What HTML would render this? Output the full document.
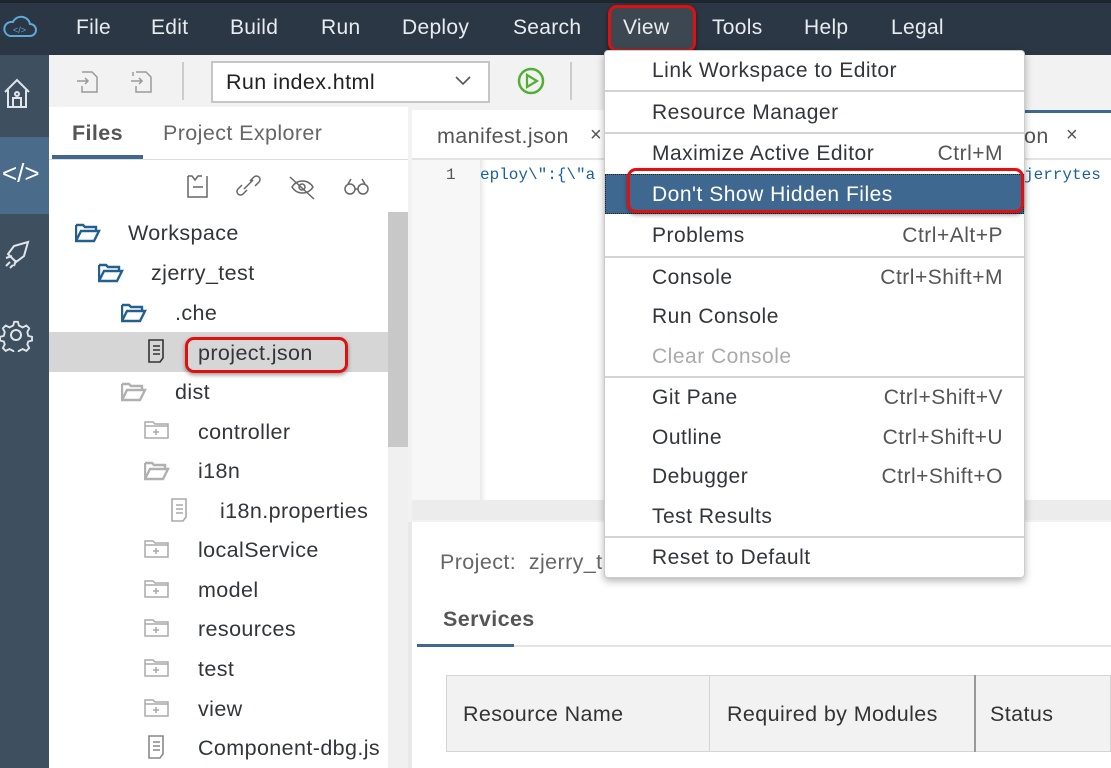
<!DOCTYPE html>
<html><head><meta charset="utf-8"><style>
*{margin:0;padding:0;box-sizing:border-box}
body{width:1111px;height:768px;overflow:hidden;position:relative;background:#fff;font-family:"Liberation Sans",sans-serif;color:#32363a}
.a{position:absolute;white-space:nowrap}
.top{left:0;top:0;width:1111px;height:55px;background:#2b3744;border-top:3px solid #1e252c}
.m{top:16px;font-size:21px;color:#e8ecef;letter-spacing:.3px}
.side{left:0;top:55px;width:49px;height:713px;background:#3e4f5f}
.t{font-size:21.5px;color:#32363a;line-height:24px;letter-spacing:.4px}
.mi{left:652px;font-size:21px;color:#32363a;line-height:24px;letter-spacing:.5px}
.sc{right:108px;font-size:21px;color:#555;line-height:24px;letter-spacing:.5px}
.sep{left:605px;width:419px;height:2px;background:#d4d4d4}
</style></head><body>
<div class="a top"></div>
<svg class="a" style="left:2px;top:14px" width="36" height="26" viewBox="0 0 36 26"><path d="M8 22h20a6 6 0 0 0 0-12a9 9 0 0 0-17-2a7 7 0 0 0-3 14z" fill="none" stroke="#5fa8d8" stroke-width="2"/><text x="11" y="19" font-size="9" fill="#5fa8d8" font-family="Liberation Sans">&lt;/&gt;</text></svg>
<div class="a m" style="left:76px">File</div>
<div class="a m" style="left:151px">Edit</div>
<div class="a m" style="left:230px">Build</div>
<div class="a m" style="left:321px">Run</div>
<div class="a m" style="left:402px">Deploy</div>
<div class="a m" style="left:513px">Search</div>
<div class="a" style="left:608px;top:5px;width:88px;height:47px;background:#3d4751;border:3px solid #e01010;border-radius:9px;box-shadow:0 2px 4px rgba(0,0,0,.5)"></div>
<div class="a m" style="left:623px">View</div>
<div class="a m" style="left:712px">Tools</div>
<div class="a m" style="left:804px">Help</div>
<div class="a m" style="left:891px">Legal</div>

<div class="a side"></div>
<div class="a" style="left:0;top:137px;width:49px;height:77px;background:#4a6b8a"></div>
<svg class="a" style="left:2px;top:76px" width="30" height="34" viewBox="0 0 30 34"><path d="M3 16L15 4l12 12M6 14v17h18V14M11 31v-9h8v9M13 18a2 2 0 1 0 4 0a2 2 0 1 0-4 0" fill="none" stroke="#dfe5ea" stroke-width="2"/></svg>
<div class="a" style="left:2px;top:158px;font-size:26px;color:#fff">&lt;/&gt;</div>
<svg class="a" style="left:2px;top:238px" width="30" height="34" viewBox="0 0 30 34"><path d="M26 4L12 8 6 16l8 8 8-6 4-14zM10 18l-6 2M14 22l-2 6M4 28l4-4M8 30l3-3" fill="none" stroke="#dfe5ea" stroke-width="2"/></svg>
<svg class="a" style="left:0;top:318px" width="34" height="34" viewBox="0 0 34 34"><circle cx="16" cy="17" r="5" fill="none" stroke="#dfe5ea" stroke-width="2"/><path d="M14 4h4l1 4 4 2 4-2 3 3-2 4 1 4 4 1v4l-4 1-1 3 2 4-3 3-4-2-4 2-1 4h-4l-1-4-4-2-4 2-3-3 2-4-1-3-4-1v-4l4-1 1-4-2-4 3-3 4 2 4-2z" fill="none" stroke="#dfe5ea" stroke-width="2" transform="translate(1 0) scale(.94)"/></svg>

<!-- toolbar -->
<div class="a" style="left:49px;top:55px;width:1062px;height:52px;background:#f2f2f2"></div>
<svg class="a" style="left:76px;top:68px" width="80" height="28" viewBox="0 0 80 28"><path d="M6 4h10l5 5v15H6v-6M1 13h11M9 10l3 3-3 3" fill="none" stroke="#999" stroke-width="1.5"/><path d="M60 4h10l5 5v15H60v-6M55 13h11M63 10l3 3-3 3M57 8v-4" fill="none" stroke="#999" stroke-width="1.5"/></svg>
<div class="a" style="left:182px;top:62px;width:2px;height:38px;background:#ccc"></div>
<div class="a" style="left:211px;top:61px;width:279px;height:42px;background:#fff;border:2px solid #c6c6c6"></div>
<div class="a t" style="left:226px;top:70px;color:#222">Run index.html</div>
<svg class="a" style="left:454px;top:75px" width="18" height="12"><path d="M2 2l7 7 7-7" fill="none" stroke="#555" stroke-width="1.6"/></svg>
<svg class="a" style="left:516px;top:66px" width="30" height="30"><circle cx="15" cy="15" r="12" fill="none" stroke="#4fb031" stroke-width="2.5"/><path d="M11 9v12l10-6z" fill="none" stroke="#4fb031" stroke-width="2.2"/></svg>
<div class="a" style="left:570px;top:62px;width:2px;height:38px;background:#ccc"></div>

<!-- left panel -->
<div class="a t" style="left:72px;top:121px;font-weight:bold;color:#555">Files</div>
<div class="a t" style="left:163px;top:121px;color:#666">Project Explorer</div>
<div class="a" style="left:52px;top:155px;width:91px;height:4px;background:#3f6890"></div>
<div class="a" style="left:49px;top:159px;width:359px;height:1px;background:#ddd"></div>
<svg class="a" style="left:185px;top:172px" width="190" height="30" viewBox="0 0 190 30"><path d="M3 4h4l3 4 3-4h4M3 4v21h19V4M8 15h10" fill="none" stroke="#666" stroke-width="1.5"/><path d="M62 18l-4 4a3 3 0 0 1-5-5l4-4M65 9l4-4a3 3 0 0 1 5 5l-4 4M59 17l9-9" fill="none" stroke="#666" stroke-width="1.5"/><path d="M107 15c5-8 16-8 21 0c-5 8-16 8-21 0zM105 5l24 22" fill="none" stroke="#666" stroke-width="1.5"/><circle cx="117" cy="15" r="3" fill="none" stroke="#666" stroke-width="1.5"/><circle cx="165" cy="17" r="5" fill="none" stroke="#666" stroke-width="1.5"/><circle cx="178" cy="17" r="5" fill="none" stroke="#666" stroke-width="1.5"/><path d="M163 12l3-5M180 12l-3-5M170 17h3" fill="none" stroke="#666" stroke-width="1.5"/></svg>
<div class="a" style="left:388px;top:212px;width:20px;height:556px;background:#f0f0f0"></div>
<div class="a" style="left:388px;top:212px;width:20px;height:235px;background:#c8c8c8"></div>
<div class="a" style="left:49px;top:332px;width:339px;height:40px;background:#d6d6d6"></div>

<svg width="0" height="0" style="position:absolute"><defs>
<g id="fo"><path d="M1 3h7l2 2h11v4M1 3v16h18l5-10H6L1 19" fill="none" stroke-width="2.4"/></g>
<g id="fc"><path d="M1 3h8l2 2h13v14H1zM1 7h23M12 10v6M9 13h6" fill="none" stroke-width="1.5"/></g>
<g id="fi"><path d="M2 1h14v18l-3 4H2zM6 7h7M6 11h7M6 15h7" fill="none" stroke-width="1.6"/></g>
</defs></svg>
<svg class="a" style="left:75px;top:222px" width="28" height="24"><use href="#fo" stroke="#22608f"/></svg>
<div class="a t" style="left:128px;top:221px">Workspace</div>
<svg class="a" style="left:98px;top:262px" width="28" height="24"><use href="#fo" stroke="#22608f"/></svg>
<div class="a t" style="left:151px;top:261px">zjerry_test</div>
<svg class="a" style="left:121px;top:302px" width="28" height="24"><use href="#fo" stroke="#22608f"/></svg>
<div class="a t" style="left:175px;top:301px">.che</div>
<svg class="a" style="left:147px;top:339px" width="20" height="26"><use href="#fi" stroke="#333"/></svg>
<div class="a" style="left:185px;top:337px;width:163px;height:36px;border:3px solid #e01010;border-radius:9px;box-shadow:0 2px 4px rgba(0,0,0,.4)"></div>
<div class="a t" style="left:198px;top:341px">project.json</div>
<svg class="a" style="left:121px;top:381px" width="28" height="24"><use href="#fo" stroke="#b0b0b0"/></svg>
<div class="a t" style="left:175px;top:380px">dist</div>
<svg class="a" style="left:144px;top:419px" width="28" height="24"><use href="#fc" stroke="#aaa"/></svg>
<div class="a t" style="left:198px;top:420px">controller</div>
<svg class="a" style="left:144px;top:460px" width="28" height="24"><use href="#fo" stroke="#b0b0b0"/></svg>
<div class="a t" style="left:198px;top:459px">i18n</div>
<svg class="a" style="left:170px;top:498px" width="20" height="26"><use href="#fi" stroke="#aaa"/></svg>
<div class="a t" style="left:220px;top:499px">i18n.properties</div>
<svg class="a" style="left:144px;top:538px" width="28" height="24"><use href="#fc" stroke="#aaa"/></svg>
<div class="a t" style="left:198px;top:538px">localService</div>
<svg class="a" style="left:144px;top:578px" width="28" height="24"><use href="#fc" stroke="#aaa"/></svg>
<div class="a t" style="left:198px;top:578px">model</div>
<svg class="a" style="left:144px;top:617px" width="28" height="24"><use href="#fc" stroke="#aaa"/></svg>
<div class="a t" style="left:198px;top:617px">resources</div>
<svg class="a" style="left:144px;top:657px" width="28" height="24"><use href="#fc" stroke="#aaa"/></svg>
<div class="a t" style="left:198px;top:657px">test</div>
<svg class="a" style="left:144px;top:697px" width="28" height="24"><use href="#fc" stroke="#aaa"/></svg>
<div class="a t" style="left:198px;top:697px">view</div>
<svg class="a" style="left:147px;top:735px" width="20" height="26"><use href="#fi" stroke="#888"/></svg>
<div class="a t" style="left:198px;top:736px">Component-dbg.js</div>

<!-- editor -->
<div class="a" style="left:408px;top:107px;width:703px;height:415px;background:#f2f2f2"></div>
<div class="a" style="left:412px;top:110px;width:699px;height:49px;background:#fff"></div>
<div class="a" style="left:412px;top:158px;width:699px;height:2px;background:#e4e4e4"></div>
<div class="a" style="left:1010px;top:110px;width:101px;height:3px;background:#3f6890"></div>
<div class="a t" style="left:437px;top:124px;color:#555">manifest.json</div>
<div class="a" style="left:590px;top:124px;font-size:20px;color:#555">×</div>
<div class="a t" style="left:1024px;top:124px;color:#555">on</div>
<div class="a" style="left:1066px;top:124px;font-size:20px;color:#555">×</div>
<div class="a" style="left:412px;top:160px;width:68px;height:340px;background:#f7f7f7"></div>
<div class="a" style="left:480px;top:160px;width:631px;height:340px;background:#fff;box-shadow:inset 6px 0 6px -4px rgba(0,0,0,.12)"></div>
<div class="a" style="left:446px;top:166px;font-family:'Liberation Mono',monospace;font-size:16px;color:#555">1</div>
<div class="a" style="left:480px;top:166px;font-family:'Liberation Mono',monospace;font-size:16px;color:#1a5f9a">eploy\":{\"a</div>
<div class="a" style="left:1024px;top:166px;font-family:'Liberation Mono',monospace;font-size:16px;color:#1a5f9a">jerrytes</div>
<div class="a" style="left:412px;top:500px;width:699px;height:20px;background:#ececec"></div>

<!-- bottom panel -->
<div class="a" style="left:408px;top:522px;width:703px;height:246px;background:#fff;border-left:4px solid #e8e8e8"></div>
<div class="a t" style="left:440px;top:550px;color:#666">Project:&nbsp; zjerry_t</div>
<div class="a t" style="left:443px;top:607px;font-weight:bold;color:#555">Services</div>
<div class="a" style="left:423px;top:645px;width:688px;height:2px;background:#e4e4e4"></div>
<div class="a" style="left:417px;top:644px;width:97px;height:3px;background:#3f6890"></div>
<div class="a" style="left:446px;top:675px;width:665px;height:77px;background:#f2f2f2;border:1px solid #d4d4d4"></div>
<div class="a" style="left:709px;top:675px;width:1px;height:77px;background:#d4d4d4"></div>
<div class="a" style="left:974px;top:675px;width:2px;height:77px;background:#999"></div>
<div class="a t" style="left:463px;top:702px;color:#333">Resource Name</div>
<div class="a t" style="left:727px;top:702px;color:#333">Required by Modules</div>
<div class="a t" style="left:990px;top:702px;color:#333">Status</div>

<!-- menu -->
<div class="a" style="left:604px;top:50px;width:421px;height:528px;background:#fff;border:1px solid #ccc;border-radius:4px;box-shadow:0 3px 8px rgba(0,0,0,.3)"></div>
<div class="a sep" style="top:90px"></div>
<div class="a sep" style="top:132px"></div>
<div class="a sep" style="top:256px"></div>
<div class="a sep" style="top:376px"></div>
<div class="a sep" style="top:536px"></div>
<div class="a" style="left:605px;top:174px;width:419px;height:40px;background:#3f6890;border:1px dotted #222"></div>
<div class="a" style="left:627px;top:168px;width:397px;height:45px;border:3px solid #e01010;border-radius:9px;box-shadow:0 2px 4px rgba(0,0,0,.4)"></div>
<div class="a mi" style="top:59px">Link Workspace to Editor</div>
<div class="a mi" style="top:101px">Resource Manager</div>
<div class="a mi" style="top:142px">Maximize Active Editor</div><div class="a sc" style="top:142px">Ctrl+M</div>
<div class="a mi" style="top:183px;color:#fff">Don't Show Hidden Files</div>
<div class="a mi" style="top:224px">Problems</div><div class="a sc" style="top:224px">Ctrl+Alt+P</div>
<div class="a mi" style="top:266px">Console</div><div class="a sc" style="top:266px">Ctrl+Shift+M</div>
<div class="a mi" style="top:305px">Run Console</div>
<div class="a mi" style="top:345px;color:#aaa">Clear Console</div>
<div class="a mi" style="top:386px">Git Pane</div><div class="a sc" style="top:386px">Ctrl+Shift+V</div>
<div class="a mi" style="top:426px">Outline</div><div class="a sc" style="top:426px">Ctrl+Shift+U</div>
<div class="a mi" style="top:465px">Debugger</div><div class="a sc" style="top:465px">Ctrl+Shift+O</div>
<div class="a mi" style="top:505px">Test Results</div>
<div class="a mi" style="top:546px">Reset to Default</div>
</body></html>
